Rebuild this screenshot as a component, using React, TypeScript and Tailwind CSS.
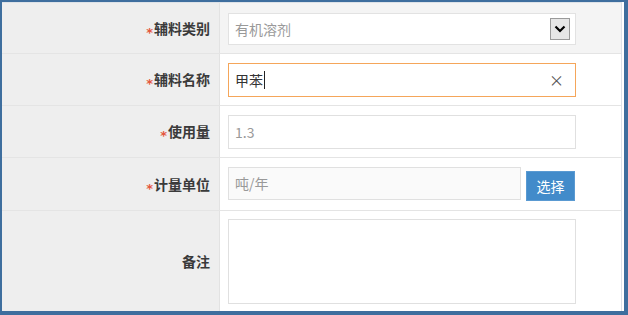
import * as React from "react";

const FONT = { fontFamily: '"Noto Sans CJK SC", "Noto Sans", sans-serif' };

function Label({ text, required = true }: { text: string; required?: boolean }) {
  return (
    <div className="flex items-center justify-end bg-[#eeeeee] border-r border-[#e2e2e2] pr-[9px] text-[14px] font-bold text-[#3a3a3a]">
      {required ? (
        <span
          style={{ fontFamily: '"DejaVu Sans", sans-serif' }}
          className="relative top-[4px] mr-[1px] text-[13px] font-bold leading-none text-[#e4573d]"
        >
          *
        </span>
      ) : null}
      <span>{text}</span>
    </div>
  );
}

function Row({
  label,
  required,
  height,
  fieldClass = "bg-white",
  children,
}: {
  label: string;
  required?: boolean;
  height: string;
  fieldClass?: string;
  children: React.ReactNode;
}) {
  return (
    <div className={`grid grid-cols-[218px_1fr] border-b border-[#e4e4e4] ${height}`}>
      <Label text={label} required={required} />
      <div className={`pl-[8px] ${fieldClass}`}>{children}</div>
    </div>
  );
}

export default function App() {
  return (
    <div style={FONT} className="w-[628px] h-[315px] bg-[#3e6e9e] pl-[2px] pt-[2px] pr-[4px] pb-[4px]">
      <div className="h-full bg-white pr-[2px]">
        <div className="flex h-full flex-col border-t border-r border-[#dde2e8]">
          <Row label="辅料类别" height="h-[51px]" fieldClass="bg-[#f4f4f4] pt-[10px]">
            <div className="relative flex h-[32px] w-[348px] items-center border border-[#e2e2e2] bg-white pl-[6px] text-[14px] text-[#999999]">
              有机溶剂
              <div className="absolute right-[5px] top-[4px] flex h-[22px] w-[20px] items-center justify-center border border-[#9a9a9a] bg-[#e6e6e6]">
                <svg width="12" height="8" viewBox="0 0 12 8">
                  <path d="M1.5 1.5 L6 6 L10.5 1.5" fill="none" stroke="#000" strokeWidth="2.2" />
                </svg>
              </div>
            </div>
          </Row>
          <Row label="辅料名称" height="h-[52px]" fieldClass="bg-white pt-[9px]">
            <div className="relative flex h-[34px] w-[348px] items-center border border-[#f5a65a] bg-white pl-[6px] text-[14px] text-[#333333]">
              甲苯
              <span className="ml-[1px] h-[18px] w-[1px] bg-[#222]" />
              <span className="absolute right-[11px] top-[7px] text-[15px] leading-[18px] text-[#555555]">
                ×
              </span>
            </div>
          </Row>
          <Row label="使用量" height="h-[52px]" fieldClass="bg-white pt-[9px]">
            <div className="flex h-[34px] w-[348px] items-center border border-[#e0e0e0] bg-white pl-[6px] text-[14px] text-[#999999]">
              1.3
            </div>
          </Row>
          <Row label="计量单位" height="h-[53px]" fieldClass="bg-white flex items-start gap-[5px] pt-[9px]">
            <div className="flex h-[33px] w-[293px] items-center border border-[#e0e0e0] bg-[#fafafa] pl-[6px] text-[14px] text-[#999999]">
              吨/年
            </div>
            <button
              type="button"
              className="mt-[4px] flex h-[30px] w-[49px] items-center justify-center border border-[#5a9ad2] bg-[#428bca] text-[14px] text-white"
            >
              选择
            </button>
          </Row>
          <div className="grid flex-1 grid-cols-[218px_1fr]">
            <Label text="备注" required={false} />
            <div className="bg-white pl-[8px] pt-[8px]">
              <div className="h-[85px] w-[348px] border border-[#e0e0e0] bg-white" />
            </div>
          </div>
        </div>
      </div>
    </div>
  );
}
